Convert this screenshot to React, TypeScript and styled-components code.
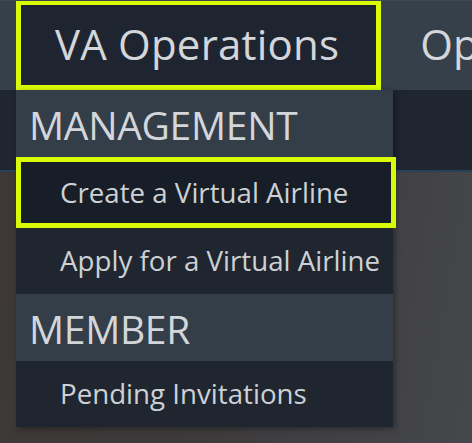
import React from 'react';
import styled, { createGlobalStyle } from 'styled-components';

const GlobalStyle = createGlobalStyle`
    html, body {
        margin: 0;
        padding: 0;
        height: 100%;
        background: #3d3a3a;
    }
    #root {
        height: 100%;
    }
    * {
        box-sizing: border-box;
    }
`;

const Page = styled.div`
    display: flex;
    flex-direction: column;
    height: 443px;
    overflow: hidden;
    position: relative;
    font-family: 'Open Sans', 'Noto Sans', Arial, sans-serif;
    color: #d3d6da;
`;

const NavBar = styled.nav`
    display: flex;
    align-items: stretch;
    height: 90px;
    padding-left: 16px;
    background: #36404b;
    border-top: 1px solid #3d4752;
    overflow: hidden;
`;

const NavItem = styled.div<{ $active?: boolean }>`
    display: flex;
    align-items: center;
    flex-shrink: 0;
    padding: 0 37px 4px 34px;
    font-size: 42px;
    letter-spacing: 0.2px;
    white-space: nowrap;
    background: ${p => (p.$active ? '#1f2530' : 'transparent')};
    border: ${p => (p.$active ? '5px solid #d9fc06' : '5px solid transparent')};
    margin-top: -1px;
    height: 90px;
`;

const SubBar = styled.div`
    height: 82px;
    background: #1f2630;
    border-bottom: 2px solid #27435a;
`;

const Hero = styled.div`
    flex: 1;
    background: linear-gradient(100deg, #3e3938 0%, #3d3a3b 45%, #45474b 100%);
`;

const Dropdown = styled.div`
    position: absolute;
    top: 90px;
    left: 16px;
    width: 377px;
    display: flex;
    flex-direction: column;
    box-shadow: 2px 2px 6px rgba(0, 0, 0, 0.35);
`;

const GroupHeader = styled.div<{ $height: number }>`
    display: flex;
    align-items: center;
    height: ${p => p.$height}px;
    padding: 2px 0 0 13px;
    background: #343e49;
    font-size: 39px;
    letter-spacing: -0.3px;
`;

const MenuItem = styled.div<{ $selected?: boolean }>`
    display: flex;
    align-items: center;
    height: ${p => (p.$selected ? 71 : 66)}px;
    padding-left: ${p => (p.$selected ? 39 : 44)}px;
    padding-bottom: 2px;
    background: ${p => (p.$selected ? '#181e27' : '#1f2630')};
    border: ${p => (p.$selected ? '5px solid #d9fc06' : 'none')};
    margin-right: ${p => (p.$selected ? -3 : 0)}px;
    font-size: 27.7px;
    color: #cdd1d5;
    white-space: nowrap;
`;

export default function App() {
    return (
        <>
            <GlobalStyle />
            <Page>
                <NavBar>
                    <NavItem $active>VA Operations</NavItem>
                    <NavItem>Operations</NavItem>
                </NavBar>
                <SubBar />
                <Hero />
                <Dropdown>
                    <GroupHeader $height={67}>MANAGEMENT</GroupHeader>
                    <MenuItem $selected>Create a Virtual Airline</MenuItem>
                    <MenuItem>Apply for a Virtual Airline</MenuItem>
                    <GroupHeader $height={67}>MEMBER</GroupHeader>
                    <MenuItem>Pending Invitations</MenuItem>
                </Dropdown>
            </Page>
        </>
    );
}
